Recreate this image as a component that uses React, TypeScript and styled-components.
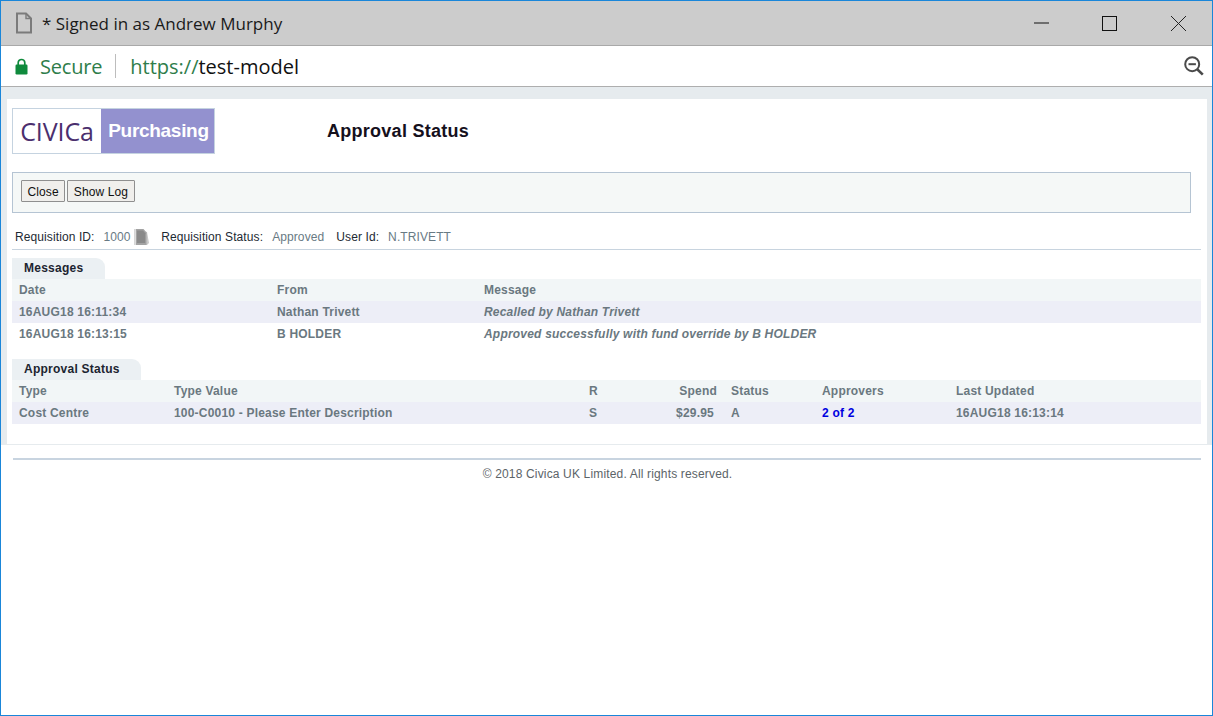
import styled, { createGlobalStyle } from "styled-components";
import { ReactElement } from "react";

const GlobalStyle = createGlobalStyle`
  html, body {
    margin: 0;
    padding: 0;
    background: #fff;
  }
  * {
    box-sizing: border-box;
  }
`;

const Window = styled.div`
  width: 1213px;
  height: 716px;
  border: 1px solid #1a86d9;
  display: flex;
  flex-direction: column;
  overflow: hidden;
  background: #fff;
  font-family: "Liberation Sans", Arial, sans-serif;
  font-size: 12px;
`;

const TitleBar = styled.div`
  height: 45px;
  flex: none;
  background: #cccccc;
  border-bottom: 1px solid #a9a9a9;
  display: flex;
  align-items: center;
  padding-left: 14px;
`;

const WindowTitle = styled.span`
  margin-left: 9px;
  font-family: "Open Sans", sans-serif;
  font-size: 17px;
  color: #1a1a1a;
  flex: 1;
`;

const WindowButton = styled.div<{ $width: number }>`
  width: ${(p) => p.$width}px;
  display: flex;
  justify-content: center;
  align-items: center;
`;

const AddressBar = styled.div`
  height: 41px;
  flex: none;
  background: #fff;
  border-bottom: 1px solid #aeaeae;
  display: flex;
  align-items: center;
  padding: 0 8px 0 14px;
`;

const SecureLabel = styled.span`
  margin-left: 12px;
  font-family: "Open Sans", sans-serif;
  font-size: 20px;
  color: #2e7d4a;
  letter-spacing: -0.2px;
`;

const Divider = styled.span`
  width: 1px;
  height: 24px;
  background: #bdbdbd;
  margin: 0 14px 0 13px;
`;

const Url = styled.span`
  font-family: "Open Sans", sans-serif;
  font-size: 20px;
  color: #111;
  flex: 1;
`;

const UrlScheme = styled.span`
  color: #2e7d4a;
`;

const Page = styled.div`
  flex: 1;
  display: flex;
  flex-direction: column;
`;

const PanelBackdrop = styled.div`
  background: #e6ebee;
  padding: 12px 5px 0 6px;
`;

const Panel = styled.div`
  background: #fff;
  height: 346px;
  padding: 9px 6px 0 5px;
  border-bottom: 1px solid #e6ebee;
`;

const Header = styled.div`
  display: flex;
  align-items: center;
`;

const Logo = styled.div`
  width: 203px;
  height: 46px;
  border: 1px solid #c5d3e0;
  display: flex;
`;

const LogoMark = styled.div`
  width: 88px;
  background: #fff;
  color: #4b2f6e;
  font-family: "Open Sans", sans-serif;
  font-size: 25px;
  font-weight: 500;
  line-height: 44px;
  text-align: center;
  letter-spacing: -0.1px;
`;

const LogoProduct = styled.div`
  flex: 1;
  background: #9391cf;
  color: #fff;
  font-weight: bold;
  font-size: 19px;
  line-height: 44px;
  text-align: center;
  padding-left: 2px;
  letter-spacing: -0.3px;
`;

const PageTitle = styled.h1`
  margin: 0 0 0 112px;
  font-size: 18px;
  font-weight: bold;
  letter-spacing: 0.27px;
  color: #15101c;
`;

const Toolbar = styled.div`
  margin-top: 18px;
  width: 1179px;
  height: 41px;
  border: 1px solid #b5c4d3;
  background: #f5f8f7;
  display: flex;
  align-items: flex-start;
  gap: 2px;
  padding: 7px 0 0 8px;
`;

const Button = styled.button`
  height: 22px;
  padding: 1px 5.5px 0;
  border: 1px solid #8f8f8f;
  border-radius: 1px;
  background: #f0efec;
  font-family: "Liberation Sans", Arial, sans-serif;
  font-size: 12px;
  letter-spacing: 0.12px;
  color: #111;
`;

const InfoRow = styled.div`
  margin-top: 15px;
  height: 22px;
  padding: 0 0 4px 3px;
  border-bottom: 1px solid #c8d4df;
  width: 1189px;
  display: flex;
  align-items: center;
  color: #1d2a33;
  letter-spacing: 0.1px;
`;

const InfoLabel = styled.span<{ $left?: number }>`
  margin-left: ${(p) => p.$left ?? 0}px;
`;

const InfoValue = styled.span`
  color: #687a84;
  margin-left: 9px;
`;

const Section = styled.section<{ $top: number }>`
  margin-top: ${(p) => p.$top}px;
  width: 1189px;
`;

const Tab = styled.div<{ $width: number }>`
  width: ${(p) => p.$width}px;
  height: 21px;
  background: #ebf0f3;
  border-top-right-radius: 9px;
  padding-left: 12px;
  line-height: 21px;
  font-weight: bold;
  color: #1c2430;
  letter-spacing: 0.25px;
`;

const Row = styled.div<{ $cols: string; $tone: "head" | "shade" | "plain" }>`
  display: grid;
  grid-template-columns: ${(p) => p.$cols};
  height: 22px;
  line-height: 22px;
  padding-left: 7px;
  font-weight: bold;
  letter-spacing: 0.2px;
  color: #6a7880;
  background: ${(p) =>
    p.$tone === "head" ? "#f2f6f7" : p.$tone === "shade" ? "#edeef7" : "#fff"};
`;

const Cell = styled.div<{ $italic?: boolean; $right?: number }>`
  font-style: ${(p) => (p.$italic ? "italic" : "normal")};
  white-space: nowrap;
  ${(p) => (p.$right !== undefined ? `text-align: right; padding-right: ${p.$right}px;` : "")}
`;

const LinkText = styled.a`
  color: #0000e0;
  text-decoration: none;
`;

const Rule = styled.div`
  margin: 13px 11px 0 12px;
  height: 2px;
  background: #c8d4e0;
`;

const Footer = styled.div`
  margin-top: 7px;
  width: 1213px;
  text-align: center;
  color: #5c6468;
  letter-spacing: 0.16px;
`;

const DocGlyph = styled.svg`
  margin-left: 3.5px;
  flex: none;
`;

const MSG_COLS = "258px 207px 1fr";
const APPROVAL_COLS = "155px 415px 40px 102px 91px 134px 1fr";

const FileIcon = (): ReactElement => (
  <svg width="18" height="22" viewBox="0 0 18 22" fill="none" stroke="#7b7b7b" strokeWidth="2">
    <path d="M2 1.5h9l5 5v14H2z" />
    <path d="M11 1.5v5h5" strokeWidth="1.4" />
  </svg>
);

const LockIcon = (): ReactElement => (
  <svg width="13" height="17" viewBox="0 0 13 17">
    <path d="M3.2 7V4.8a3.3 3.3 0 0 1 6.6 0V7" fill="none" stroke="#0f8a3c" strokeWidth="1.7" />
    <rect x="0.5" y="6.5" width="12" height="10" rx="1.2" fill="#0f8a3c" />
  </svg>
);

const ZoomOutIcon = (): ReactElement => (
  <svg width="20" height="20" viewBox="0 0 20 20" fill="none" stroke="#4a4a4a">
    <circle cx="8.2" cy="8.2" r="7" strokeWidth="2" />
    <path d="M4.5 8.2h7.4" strokeWidth="2" />
    <path d="M13.2 13.2l5.6 5.4" strokeWidth="2.6" />
  </svg>
);

const DocIcon = (): ReactElement => (
  <DocGlyph width="16" height="18" viewBox="0 0 16 18">
    <path d="M10 3l3 1 2 11-2 2H4z" fill="#c9c9c9" />
    <path d="M0.5 1h9l3 3.5V17H0.5z" fill="#a3a3a3" />
    <path d="M3 2.5h6l2.2 2.8V15H3z" fill="#8a8a8a" />
    <path d="M0.5 1H2v16H0.5z" fill="#dcdcdc" />
  </DocGlyph>
);

export default function App(): ReactElement {
  return (
    <>
      <GlobalStyle />
      <Window>
        <TitleBar>
          <FileIcon />
          <WindowTitle>* Signed in as Andrew Murphy</WindowTitle>
          <WindowButton $width={66}>
            <svg width="15" height="2" viewBox="0 0 15 2">
              <path d="M0 1h15" stroke="#111" strokeWidth="1" />
            </svg>
          </WindowButton>
          <WindowButton $width={71}>
            <svg width="15" height="15" viewBox="0 0 15 15">
              <rect x="0.5" y="0.5" width="14" height="14" fill="none" stroke="#111" />
            </svg>
          </WindowButton>
          <WindowButton $width={67}>
            <svg width="15" height="15" viewBox="0 0 15 15">
              <path d="M0 0l15 15M15 0L0 15" stroke="#222" strokeWidth="1" />
            </svg>
          </WindowButton>
        </TitleBar>
        <AddressBar>
          <LockIcon />
          <SecureLabel>Secure</SecureLabel>
          <Divider />
          <Url>
            <UrlScheme>https://</UrlScheme>test-model
          </Url>
          <ZoomOutIcon />
        </AddressBar>
        <Page>
          <PanelBackdrop>
            <Panel>
              <Header>
                <Logo>
                  <LogoMark>CIVICa</LogoMark>
                  <LogoProduct>Purchasing</LogoProduct>
                </Logo>
                <PageTitle>Approval Status</PageTitle>
              </Header>
              <Toolbar>
                <Button>Close</Button>
                <Button>Show Log</Button>
              </Toolbar>
              <InfoRow>
                <InfoLabel>Requisition ID:</InfoLabel>
                <InfoValue>1000</InfoValue>
                <DocIcon />
                <InfoLabel $left={11}>Requisition Status:</InfoLabel>
                <InfoValue>Approved</InfoValue>
                <InfoLabel $left={12}>User Id:</InfoLabel>
                <InfoValue>N.TRIVETT</InfoValue>
              </InfoRow>
              <Section $top={8}>
                <Tab $width={93}>Messages</Tab>
                <Row $cols={MSG_COLS} $tone="head">
                  <Cell>Date</Cell>
                  <Cell>From</Cell>
                  <Cell>Message</Cell>
                </Row>
                <Row $cols={MSG_COLS} $tone="shade">
                  <Cell>16AUG18 16:11:34</Cell>
                  <Cell>Nathan Trivett</Cell>
                  <Cell $italic>Recalled by Nathan Trivett</Cell>
                </Row>
                <Row $cols={MSG_COLS} $tone="plain">
                  <Cell>16AUG18 16:13:15</Cell>
                  <Cell>B HOLDER</Cell>
                  <Cell $italic>Approved successfully with fund override by B HOLDER</Cell>
                </Row>
              </Section>
              <Section $top={14}>
                <Tab $width={129}>Approval Status</Tab>
                <Row $cols={APPROVAL_COLS} $tone="head">
                  <Cell>Type</Cell>
                  <Cell>Type Value</Cell>
                  <Cell>R</Cell>
                  <Cell $right={14}>Spend</Cell>
                  <Cell>Status</Cell>
                  <Cell>Approvers</Cell>
                  <Cell>Last Updated</Cell>
                </Row>
                <Row $cols={APPROVAL_COLS} $tone="shade">
                  <Cell>Cost Centre</Cell>
                  <Cell>100-C0010 - Please Enter Description</Cell>
                  <Cell>S</Cell>
                  <Cell $right={17}>$29.95</Cell>
                  <Cell>A</Cell>
                  <Cell>
                    <LinkText href="#">2 of 2</LinkText>
                  </Cell>
                  <Cell>16AUG18 16:13:14</Cell>
                </Row>
              </Section>
            </Panel>
          </PanelBackdrop>
          <Rule />
          <Footer>© 2018 Civica UK Limited. All rights reserved.</Footer>
        </Page>
      </Window>
    </>
  );
}
